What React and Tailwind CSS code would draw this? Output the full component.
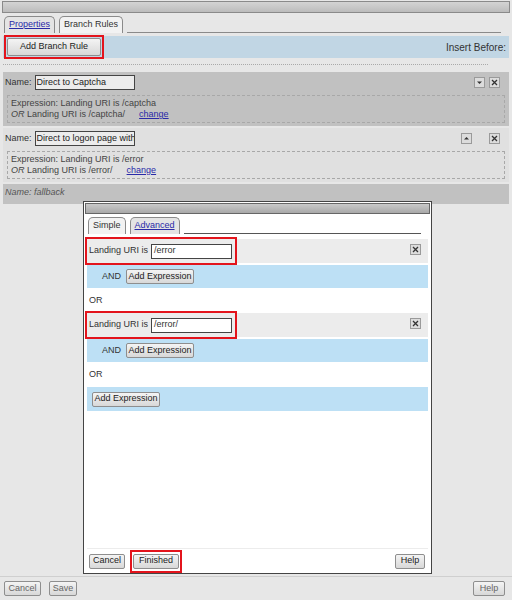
import React from 'react'

function MiniBtn({ kind }) {
  return (
    <span className="inline-flex h-[11px] w-[11px] items-center justify-center border border-[#9a9a9a] bg-[#dcdcdc]">
      <svg width="7" height="7" viewBox="0 0 7 7">
        {kind === 'x' && <path d="M1 1L6 6M6 1L1 6" stroke="#333" strokeWidth="1.3" />}
        {kind === 'down' && <path d="M1 2.5H6L3.5 5Z" fill="#333" />}
        {kind === 'up' && <path d="M1 4.5H6L3.5 2Z" fill="#333" />}
      </svg>
    </span>
  )
}

function Btn({ children, className = '' }) {
  return (
    <span className={`inline-flex h-[15px] items-center justify-center whitespace-nowrap rounded-[2px] border border-[#8e8e8e] bg-gradient-to-b from-[#f4f4f4] to-[#d8d8d8] px-[2px] text-[#222] ${className}`}>
      {children}
    </span>
  )
}

function Tab({ children, active, link }) {
  return (
    <div className={`flex h-[17px] items-center rounded-t-[5px] border border-b-0 border-[#8a8a8a] px-[4px] ${active ? 'bg-[#f2f2f2]' : 'bg-[#e4e4e4]'}`}>
      <span className={link ? 'text-[#2a2aa8] underline' : 'text-[#333]'}>{children}</span>
    </div>
  )
}

function Rule({ name, bg, path, toggle, iconGap }) {
  return (
    <div className={`mx-[3px] flex flex-col ${bg} pb-[3px]`}>
      <div className="flex h-[21px] items-center pl-[2px] pr-[9px]">
        <span>Name:</span>
        <span className="ml-[3px] flex h-[15px] w-[100px] items-center overflow-hidden whitespace-nowrap border border-[#444] bg-[#ececec] px-[1px] text-[#222]">{name}</span>
        <div className={`ml-auto flex items-center ${iconGap}`}>
          <MiniBtn kind={toggle} />
          <MiniBtn kind="x" />
        </div>
      </div>
      <div className="mx-[4px] mt-[2px] flex h-[28px] flex-col justify-center border border-dashed border-[#a8a8a8] pl-[3px] leading-[11px] text-[#444]">
        <div>Expression: Landing URI is {path}</div>
        <div>
          <i>OR</i> Landing URI is {path}/
          <span className="ml-[14px] text-[#2a2aa8] underline">change</span>
        </div>
      </div>
    </div>
  )
}

function ExprRow({ value }) {
  return (
    <div className="mx-[3px] flex h-[24px] items-center bg-[#ececec] pr-[7px]">
      <div className="flex h-[24px] w-[148px] items-center outline-2 outline-[#e3141c] pl-[2px] pr-[3px]">
        <span className="shrink-0 whitespace-nowrap">Landing URI is</span>
        <span className="ml-auto flex h-[15px] w-[81px] shrink-0 items-center border border-[#444] bg-white px-[2px]">{value}</span>
      </div>
      <div className="ml-auto">
        <MiniBtn kind="x" />
      </div>
    </div>
  )
}

function AndRow() {
  return (
    <div className="mx-[3px] mt-[2px] flex h-[23px] items-center bg-[#bde0f5] pl-[15px]">
      <span>AND</span>
      <Btn className="ml-[5px] w-[68px]">Add Expression</Btn>
    </div>
  )
}

export default function App() {
  return (
    <div className="relative flex h-[600px] w-[512px] flex-col overflow-hidden bg-[#e7e7e7] font-['Liberation_Sans',sans-serif] text-[9px] text-[#333]">
      <div className="mx-[2px] mt-px h-[12px] border border-[#8a8a8a] bg-gradient-to-b from-[#d4d4d4] to-[#bcbcbc]" />

      <div className="mt-[3px] flex items-end gap-[4px] pl-[4px] pr-[11px]">
        <Tab link>Properties</Tab>
        <Tab active>Branch Rules</Tab>
        <div className="flex-1 border-b border-[#8a8a8a]" />
      </div>

      <div className="mx-[3px] mt-[3px] flex h-[22px] items-start justify-between bg-[#c1d6e4]">
        <div className="ml-[1px] mt-[-1px] border-2 border-[#e3141c] px-px py-px">
          <Btn className="h-[18px] w-[94px]">Add Branch Rule</Btn>
        </div>
        <span className="mr-[3px] mt-[4px] text-[10px]">Insert Before:</span>
      </div>

      <div className="mx-[3px] mt-[6px] mr-[24px] border-b border-dotted border-[#aaa]" />

      <div className="mt-[7px] flex flex-col gap-[2px]">
        <Rule name="Direct to Captcha" bg="bg-[#c1c1c1]" path="/captcha" toggle="down" iconGap="gap-[4px]" />
        <Rule name="Direct to logon page with" bg="bg-[#e0e0e0]" path="/error" toggle="up" iconGap="gap-[17px]" />
        <div className="mx-[3px] flex h-[20px] items-start bg-[#c1c1c1] pl-[2px] pt-[2px] italic text-[#555]">Name: fallback</div>
      </div>

      <div className="flex-1" />

      <div className="flex h-[24px] items-center justify-between border-t border-[#cfcfcf] px-[4px]">
        <div className="flex gap-[8px]">
          <Btn className="w-[37px] text-[#666]">Cancel</Btn>
          <Btn className="w-[28px] text-[#666]">Save</Btn>
        </div>
        <Btn className="mr-[3px] w-[32px] text-[#666]">Help</Btn>
      </div>

      {/* modal dialog on top of page */}
      <div className="absolute left-[83px] top-[201px] flex h-[373px] w-[349px] flex-col border border-[#444] bg-white">
        <div className="mx-[1px] mt-[1px] h-[11px] border border-[#666] bg-gradient-to-b from-[#c9c9c9] to-[#a9a9a9]" />
        <div className="mt-[3px] flex items-end gap-[4px] pl-[4px] pr-[10px]">
          <Tab active>Simple</Tab>
          <Tab link>Advanced</Tab>
          <div className="flex-1 border-b border-[#555]" />
        </div>
        <div className="mt-[5px]" />
        <ExprRow value="/error" />
        <AndRow />
        <div className="flex h-[25px] items-center pl-[5px]">OR</div>
        <ExprRow value="/error/" />
        <AndRow />
        <div className="flex h-[25px] items-center pl-[5px]">OR</div>
        <div className="mx-[3px] flex h-[24px] items-center bg-[#bde0f5] pl-[5px]">
          <Btn className="w-[68px]">Add Expression</Btn>
        </div>
        <div className="flex-1" />
        <div className="mx-[3px] flex h-[25px] items-center border-t border-[#ececec] pl-[2px] pr-[3px]">
          <Btn className="w-[36px]">Cancel</Btn>
          <div className="ml-[5px] border-2 border-[#e3141c] px-px py-[2px]">
            <Btn className="w-[46px]">Finished</Btn>
          </div>
          <Btn className="ml-auto w-[30px]">Help</Btn>
        </div>
      </div>
    </div>
  )
}
